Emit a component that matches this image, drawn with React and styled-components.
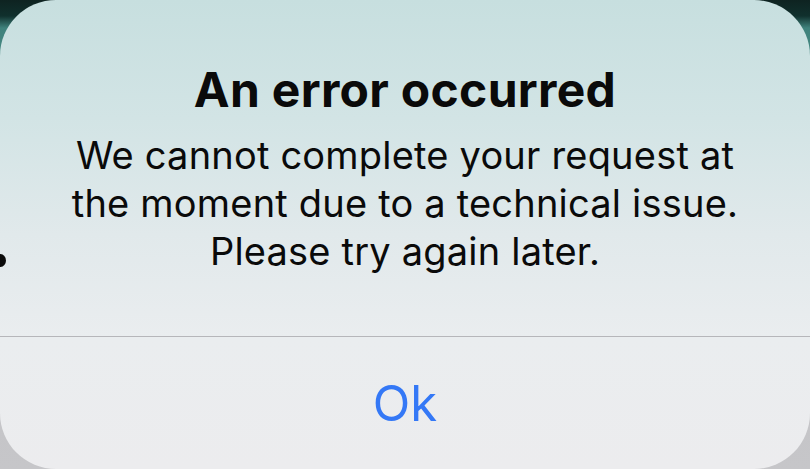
import React from 'react';
import styled, { createGlobalStyle } from 'styled-components';

const GlobalStyle = createGlobalStyle`
  html, body {
    margin: 0;
    padding: 0;
    width: 810px;
    height: 469px;
    overflow: hidden;
    background: linear-gradient(
      to bottom,
      #0e2321 0px,
      #10302d 16px,
      #3f827c 28px,
      #4b8c86 70px,
      #8fa9a8 200px,
      #c4c4c7 380px,
      #c6c6c9 469px
    );
    font-family: 'Inter', 'Noto Sans', sans-serif;
  }
`;

const Screen = styled.div`
  position: relative;
  width: 810px;
  height: 469px;
`;

const Alert = styled.div`
  width: 810px;
  height: 469px;
  border-radius: 56px;
  overflow: hidden;
  display: flex;
  flex-direction: column;
  background: linear-gradient(
    to bottom,
    #c7dfdf 0%,
    #d2e4e5 25%,
    #e1e9eb 50%,
    #eaedef 72%,
    #ececee 100%
  );
`;

const Body = styled.div`
  height: 336px;
  box-sizing: border-box;
  padding-top: 62px;
  display: flex;
  flex-direction: column;
  align-items: center;
  text-align: center;
`;

const Title = styled.h1`
  margin: 0;
  font-size: 48px;
  line-height: 56px;
  font-weight: 700;
  color: #0a0a0a;
  letter-spacing: 0.3px;
`;

const Message = styled.p`
  margin: 13px 0 0;
  font-size: 38px;
  line-height: 48px;
  font-weight: 400;
  color: #0a0a0a;
  letter-spacing: 0.2px;
`;

const Actions = styled.div`
  flex: 1;
  border-top: 1px solid #b6b6ba;
  display: flex;
  align-items: center;
  justify-content: center;
`;

const ActionButton = styled.button`
  border: none;
  background: none;
  padding: 0;
  font-family: inherit;
  font-size: 49px;
  font-weight: 400;
  color: #3478f6;
  cursor: pointer;
`;

const Dot = styled.span`
  position: absolute;
  left: -5px;
  top: 254px;
  width: 11px;
  height: 13px;
  border-radius: 50%;
  background: #0b0b0b;
`;

export default function App() {
  return (
    <>
      <GlobalStyle />
      <Screen>
        <Alert>
          <Body>
            <Title>An error occurred</Title>
            <Message>
              We cannot complete your request at
              <br />
              the moment due to a technical issue.
              <br />
              Please try again later.
            </Message>
          </Body>
          <Actions>
            <ActionButton>Ok</ActionButton>
          </Actions>
        </Alert>
        <Dot />
      </Screen>
    </>
  );
}
